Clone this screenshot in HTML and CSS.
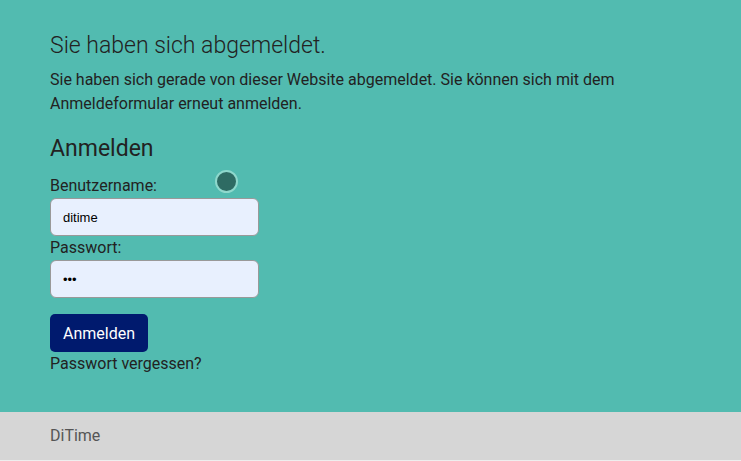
FILE: index.html
```html
<!DOCTYPE html>
<html lang="de">
<head>
    <meta charset="UTF-8">
    <meta name="viewport" content="width=device-width, initial-scale=1.0">
    <title>DiTime - Abgemeldet</title>
    <link rel="stylesheet" href="styles.css">
</head>
<body>
    <main class="content">
        <h1 class="title">Sie haben sich abgemeldet.</h1>
        <p class="intro">Sie haben sich gerade von dieser Website abgemeldet. Sie können sich mit dem Anmeldeformular erneut anmelden.</p>

        <h2 class="subtitle">Anmelden</h2>
        <form class="login" onsubmit="return false">
            <label for="username">Benutzername:</label>
            <input type="text" id="username" value="ditime">
            <label for="password">Passwort:</label>
            <input type="password" id="password" value="abc">
            <button type="submit">Anmelden</button>
        </form>
        <a class="forgot" href="#">Passwort vergessen?</a>

        <span class="cursor-dot"></span>
    </main>
    <footer class="footer">DiTime</footer>
</body>
</html>
```

FILE: styles.css
```css
html, body {
    height: 100%;
}
body {
    margin: 0;
    font-family: Roboto, "Liberation Sans", sans-serif;
    background: #52bbb0;
    color: #222;
    display: flex;
    flex-direction: column;
}
.content {
    position: relative;
    flex: 1;
    padding: 30px 50px 0;
}
.title {
    font-size: 23px;
    font-weight: 300;
    margin: 0 0 6px;
    line-height: 32px;
}
.intro {
    font-size: 16px;
    line-height: 24px;
    margin: 0 0 17px;
    max-width: 600px;
}
.subtitle {
    font-size: 23px;
    font-weight: 400;
    margin: 0 0 11px;
    line-height: 32px;
}
.login {
    display: flex;
    flex-direction: column;
    align-items: flex-start;
}
.login label {
    font-size: 16px;
    line-height: 20px;
}
.login input {
    width: 209px;
    height: 38px;
    box-sizing: border-box;
    margin: 2px 0 2px;
    padding: 0 12px;
    border: 1px solid #999;
    border-radius: 6px;
    background: #e8f0fe;
    font-family: "Liberation Sans", Arial, sans-serif;
    font-size: 13px;
    color: #000;
}
.login button {
    margin-top: 14px;
    height: 38px;
    padding: 0 13px;
    border: none;
    border-radius: 5px;
    background: #001a6e;
    color: #fff;
    font-family: inherit;
    font-size: 16px;
    cursor: pointer;
}
.forgot {
    display: block;
    margin-top: 2px;
    font-size: 16px;
    line-height: 20px;
    color: #222;
    text-decoration: none;
}
.cursor-dot {
    position: absolute;
    left: 215px;
    top: 170px;
    width: 19px;
    height: 19px;
    border-radius: 50%;
    background: #2e6b63;
    border: 2px solid #8ed8cc;
}
.footer {
    height: 48px;
    line-height: 48px;
    padding-left: 50px;
    background: #d6d6d6;
    color: #555;
    font-size: 16px;
    border-bottom: 1px solid #eee;
}
```
